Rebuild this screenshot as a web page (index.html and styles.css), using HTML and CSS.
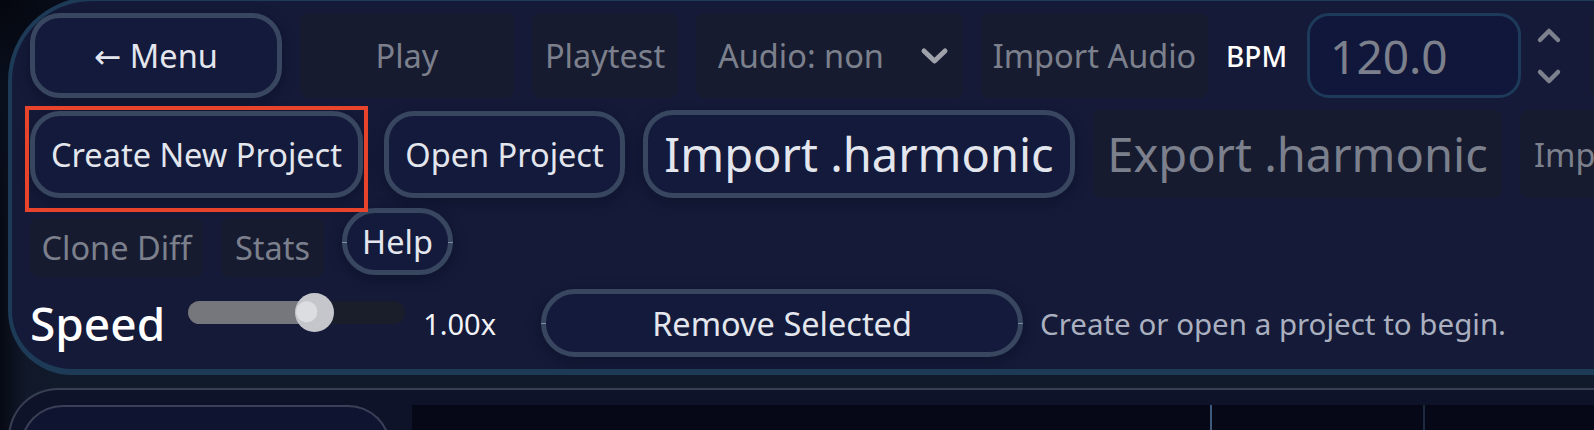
FILE: index.html
```html
<!DOCTYPE html>
<html lang="en">
<head>
    <meta charset="UTF-8">
    <title>Harmonic Editor</title>
    <link rel="stylesheet" href="styles.css">
</head>
<body>
    <div class="toolbar">
        <div class="highlight"></div>

        <div class="row row-top">
            <button class="btn btn-menu">← Menu</button>
            <button class="btn-off btn-play" disabled>Play</button>
            <button class="btn-off btn-playtest" disabled>Playtest</button>
            <div class="btn-off audio-select">
                <span>Audio: non</span>
                <svg class="chevron" width="29" height="18" viewBox="0 0 29 18">
                    <polyline points="4,4 14.5,14 25,4" fill="none" stroke="#9fa2ab" stroke-width="5" stroke-linecap="round" stroke-linejoin="round"/>
                </svg>
            </div>
            <button class="btn-off btn-import-audio" disabled>Import Audio</button>
            <span class="bpm-label">BPM</span>
            <div class="bpm-input">120.0</div>
            <svg class="spinner" width="26" height="60" viewBox="0 0 26 60">
                <polyline points="4,14 13,5 22,14" fill="none" stroke="#7d818d" stroke-width="4.5" stroke-linecap="round" stroke-linejoin="round"/>
                <polyline points="4,46 13,55 22,46" fill="none" stroke="#7d818d" stroke-width="4.5" stroke-linecap="round" stroke-linejoin="round"/>
            </svg>
            <button class="btn-off btn-more" disabled></button>
        </div>

        <div class="row row-project">
            <button class="btn btn-create">Create New Project</button>
            <button class="btn btn-open">Open Project</button>
            <button class="btn btn-big btn-import">Import .harmonic</button>
            <button class="btn-off btn-big btn-export" disabled>Export .harmonic</button>
            <button class="btn-off btn-import-midi" disabled>Import MIDI</button>
        </div>

        <div class="row row-tools">
            <button class="btn-off btn-clone" disabled>Clone Diff</button>
            <button class="btn-off btn-stats" disabled>Stats</button>
            <button class="btn btn-pill btn-help">Help</button>
        </div>

        <div class="row row-speed">
            <span class="speed-label">Speed</span>
            <div class="speed-slider">
                <div class="speed-fill" style="width: 58%"></div>
                <div class="speed-thumb" style="left: 58%"></div>
            </div>
            <span class="speed-value">1.00x</span>
            <button class="btn btn-pill btn-remove">Remove Selected</button>
            <span class="status">Create or open a project to begin.</span>
        </div>
    </div>

    <div class="workspace">
        <div class="side-card"></div>
        <div class="timeline">
            <div class="beat beat-first"></div>
            <div class="beat beat-bar"></div>
            <div class="beat beat-sub"></div>
        </div>
    </div>
</body>
</html>
```

FILE: styles.css
```css
* {
    box-sizing: border-box;
}

html, body {
    margin: 0;
}

body {
    width: 1594px;
    height: 430px;
    overflow: hidden;
    font-family: 'Noto Sans', 'Open Sans', 'DejaVu Sans', sans-serif;
    background:
        radial-gradient(circle at 0 0, #04070e 0, #0a0f1e 90px, rgba(17, 26, 43, 0) 220px),
        linear-gradient(to right, #070a14 0, #101829 26px, #111a2b 60px);
    background-color: #111a2b;
}

/* top control panel */
.toolbar {
    position: relative;
    width: 1760px;
    margin: -3px 0 0 8px;
    padding: 12px 0 12px 18px;
    border: 4px solid #1d3a56;
    border-bottom-width: 6px;
    border-radius: 84px 0 0 64px;
    background: #141a38;
    overflow: hidden;
}

.highlight {
    position: absolute;
    left: 13px;
    top: 105px;
    width: 343px;
    height: 106px;
    border: 4px solid #e8432b;
    z-index: 2;
}

.row {
    display: flex;
    align-items: center;
    gap: 18px;
    white-space: nowrap;
}

.row-top {
    height: 85px;
}

.row-project {
    height: 88px;
    margin-top: 12px;
}

.row-tools {
    height: 69px;
    margin-top: 10px;
    align-items: flex-end;
}

.row-speed {
    height: 68px;
    margin-top: 12px;
    gap: 0;
}

button {
    font-family: inherit;
    margin: 0;
    cursor: pointer;
}

.btn {
    position: relative;
    height: 100%;
    padding: 0 14px;
    font-size: 32.5px;
    color: #e4e6ee;
    background-color: #131a3b;
    border: 5px solid #38465f;
    border-radius: 30px;
    box-shadow: 0 4px 14px rgba(6, 9, 22, 0.35);
}

.btn-off {
    display: flex;
    align-items: center;
    justify-content: center;
    height: 100%;
    padding: 0 14px;
    font-size: 32.5px;
    color: #7c808d;
    background-color: #161b2f;
    border: none;
    border-radius: 8px;
}

.btn-big {
    font-size: 47px;
}

.btn-pill {
    border-radius: 40px;
}

.btn-pill::before,
.btn-pill::after {
    content: '';
    position: absolute;
    top: 50%;
    width: 5px;
    height: 1px;
    background: #7d8ca6;
}

.btn-pill::before {
    left: -5px;
}

.btn-pill::after {
    right: -5px;
}

/* row one */
.btn-menu {
    width: 252px;
}

.btn-play {
    width: 214px;
}

.btn-playtest {
    width: 146px;
}

.audio-select {
    width: 267px;
    justify-content: space-between;
    padding: 0 14px 0 22px;
}

.btn-import-audio {
    width: 227px;
}

.bpm-label {
    font-size: 28px;
    font-weight: 500;
    color: #ffffff;
}

.bpm-input {
    display: flex;
    align-items: center;
    width: 214px;
    height: 100%;
    margin-left: 2px;
    padding-left: 20px;
    font-size: 46px;
    color: #7c808c;
    background-color: #11173a;
    border: 3px solid #1e3a5a;
    border-radius: 22px;
}

.spinner {
    margin-left: -3px;
}

.btn-more {
    width: 160px;
    margin-left: 10px;
}

/* row two */
.btn-create {
    width: 333px;
    height: 87px;
    padding: 0 10px;
}

.btn-open {
    width: 241px;
    height: 87px;
    margin-left: 3px;
}

.btn-import {
    width: 432px;
    padding: 0 10px;
}

.btn-export {
    width: 409px;
}

.btn-import-midi {
    width: 200px;
    justify-content: flex-start;
}

/* row three */
.btn-clone {
    width: 173px;
    height: 59px;
}

.btn-stats {
    width: 103px;
    height: 59px;
}

.btn-help {
    width: 111px;
    height: 67px;
    margin-bottom: 2px;
    padding: 0;
}

/* row four */
.speed-label {
    font-size: 46px;
    font-weight: 500;
    color: #ffffff;
}

.speed-slider {
    position: relative;
    width: 217px;
    height: 23px;
    margin: 0 0 22px 23px;
    border-radius: 12px;
    background-color: #1a1d2a;
}

.speed-fill {
    height: 100%;
    border-radius: 12px 0 0 12px;
    background-color: #76777d;
}

.speed-thumb {
    position: absolute;
    top: 50%;
    width: 39px;
    height: 39px;
    margin: -19.5px 0 0 -19.5px;
    border-radius: 50%;
    background: radial-gradient(circle at 30% 48%, #dcdde0 0, #dcdde0 10px, #c4c6cb 11px);
}

.speed-value {
    margin-left: 18px;
    font-size: 29px;
    color: #f2f3f7;
}

.btn-remove {
    width: 482px;
    margin-left: 45px;
}

.status {
    margin-left: 17px;
    font-size: 29.5px;
    color: #aab0bf;
}

/* lower workspace */
.workspace {
    display: flex;
    gap: 21px;
    height: 60px;
    margin: 13px 0 0 8px;
    padding: 15px 0 0 10px;
    border-top: 2px solid #393f53;
    border-left: 2px solid #393f53;
    border-radius: 50px 0 0 0;
    background-color: #0f1329;
}

.side-card {
    width: 371px;
    border: 2px solid #3a4157;
    border-bottom: none;
    border-radius: 56px 56px 0 0;
    background-color: #0f1431;
}

.timeline {
    flex: 1;
    display: flex;
    background-color: #060817;
}

.beat-first {
    width: 798px;
}

.beat-bar {
    width: 213px;
    border-left: 2px solid #3c5a7b;
}

.beat-sub {
    flex: 1;
    border-left: 2px solid #1d2b42;
}
```
